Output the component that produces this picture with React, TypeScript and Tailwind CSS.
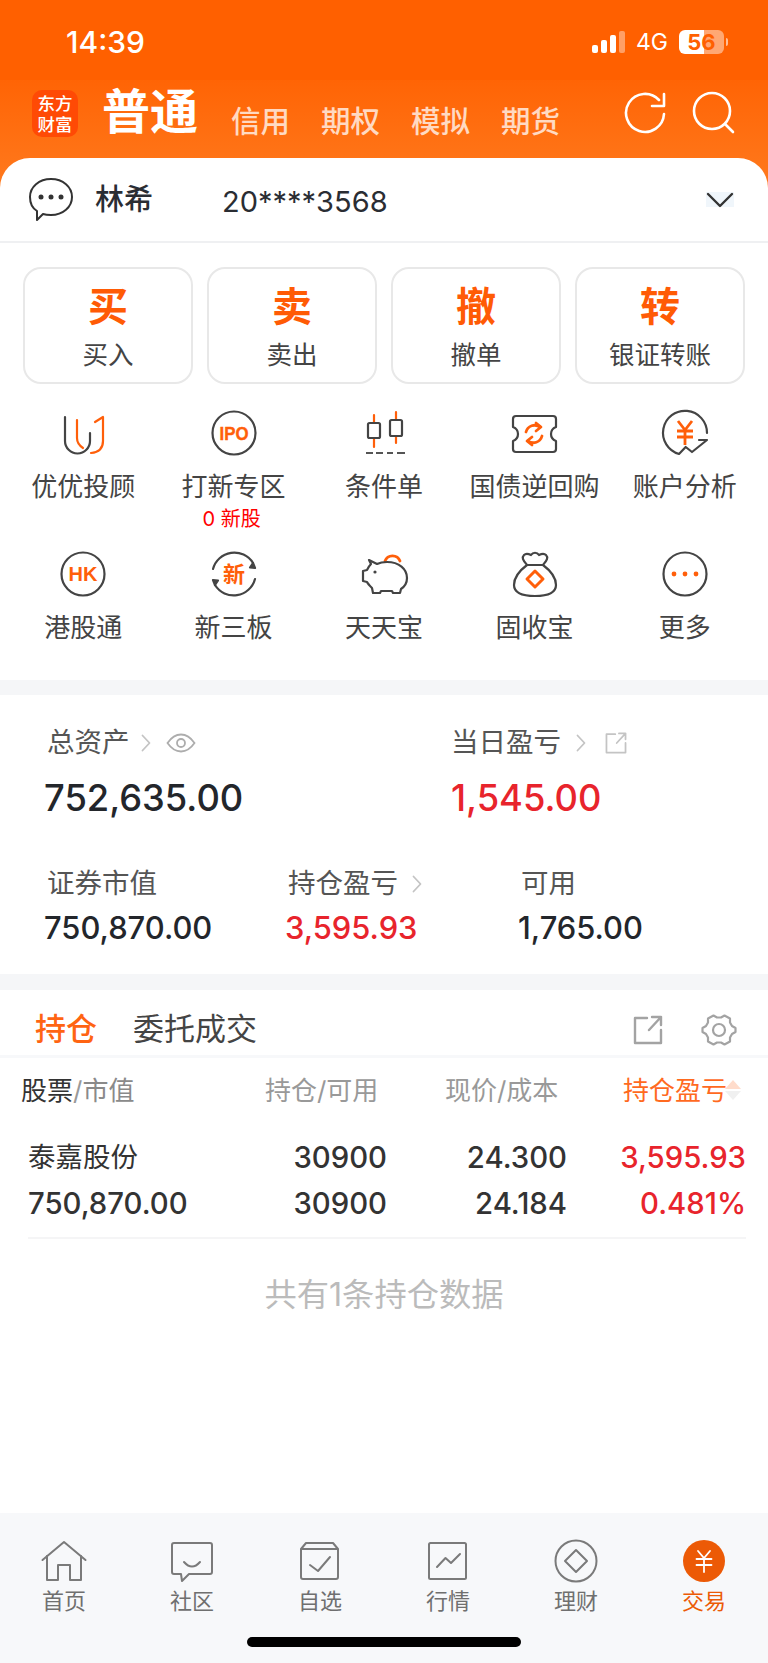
import React from "react";

const O = "#ff5f0a";
const D = "#444444";

function Circle({ c = D }: { c?: string }) {
  return <circle cx="25" cy="25" r="21.5" fill="none" stroke={c} strokeWidth="2.2" />;
}

function Icon({ name }: { name: string }) {
  const common = { fill: "none", strokeWidth: 2.2, strokeLinecap: "round" as const, strokeLinejoin: "round" as const };
  let body: React.ReactNode = null;
  if (name === "uu")
    body = (
      <g {...common}>
        <path d="M7 9V33a12.5 12.5 0 0 0 25 0V25" stroke={D} />
        <path d="M19 12V30Q19 36 25 40" stroke={O} />
        <path d="M37 14L45 9V33Q45 44 33 45" stroke={O} />
      </g>
    );
  if (name === "ipo")
    body = (
      <>
        <Circle />
        <text x="25" y="31.5" textAnchor="middle" textLength="29" lengthAdjust="spacingAndGlyphs" fontSize="18.5" fontWeight="700" fill={O} stroke={O} strokeWidth="0.4" fontFamily="'Liberation Sans',sans-serif">IPO</text>
      </>
    );
  if (name === "cond")
    body = (
      <g {...common}>
        <path d="M15 7V15M15 30V39M37 4V12M37 28V35" stroke={O} />
        <rect x="9" y="15" width="12" height="15" rx="1.5" stroke={D} />
        <rect x="31" y="12" width="12" height="16" rx="1.5" stroke={D} />
        <path d="M7 45H14M17 45H24M28 45H34M38 45H46" stroke="#555" strokeLinecap="butt" />
      </g>
    );
  if (name === "bond")
    body = (
      <g {...common}>
        <path d="M7 8H44Q47 8 47 11V19Q42 21 42 26T47 33V41Q47 44 44 44H7Q4 44 4 41V33Q9 31 9 26T4 19V11Q4 8 7 8Z" stroke={D} />
        <path d="M17 24A9 9 0 0 1 31 19" stroke={O} strokeWidth="2.8" />
        <path d="M33 28A9 9 0 0 1 19 33" stroke={O} strokeWidth="2.8" />
        <path d="M27 15L32 19L27 23" stroke={O} strokeWidth="2.8" />
        <path d="M23 29L18 33L23 37" stroke={O} strokeWidth="2.8" />
      </g>
    );
  if (name === "acct")
    body = (
      <g {...common}>
        <path d="M47 25A22 22 0 1 0 19 46L25.7 39L32 44L47 32H39" stroke={D} />
        <path d="M18 13L25 22L32 13M17 23H33M17 29H33M25 22V37" stroke={O} strokeWidth="2.8" strokeLinecap="butt" />
      </g>
    );
  if (name === "hk")
    body = (
      <>
        <Circle />
        <text x="25" y="32" textAnchor="middle" fontSize="20" fontWeight="700" fill={O} fontFamily="'Liberation Sans',sans-serif">HK</text>
      </>
    );
  if (name === "xin")
    body = (
      <>
        <g {...common} stroke={D}>
          <path d="M4 20A22 22 0 0 1 44 14" />
          <path d="M46 30A22 22 0 0 1 6 36" />
          <path d="M44 14L46 19L41 18.500Z" fill={D} />
          <path d="M6 36L4 31L9 31.500Z" fill={D} />
        </g>
        <text x="25" y="33" textAnchor="middle" fontSize="22" fontWeight="700" fill={O} fontFamily="'Noto Sans CJK SC',sans-serif">新</text>
      </>
    );
  if (name === "pig")
    body = (
      <g {...common}>
        <path d="M26 12A8 8 0 0 1 41 12" stroke={O} strokeWidth="2.8" />
        <path d="M10 11L18 15Q22 13 28 13C40 13 48 20 48 29C48 35 45 38 42 40L41 44H34L33 42H22L21 44H14L13 39C11 37 9 35 8 33L4 32V22L8 21C9 19 10 17 12 15Z" stroke={D} />
        <circle cx="16" cy="23" r="1.6" fill={D} stroke="none" />
      </g>
    );
  if (name === "bag")
    body = (
      <g {...common}>
        <path d="M18 16C10 22 5 29 5 36C5 44 12 47 26 47C40 47 47 44 47 36C47 29 42 22 34 16C37 12 40 9 37 6C35 4 32 5 30 6C28 3 24 3 22 6C20 5 17 4 15 6C12 9 15 12 18 16ZM18 16H34" stroke={D} />
        <path d="M26 22L34 30L26 38L18 30Z" stroke={O} strokeWidth="3" />
      </g>
    );
  if (name === "more")
    body = (
      <>
        <Circle />
        <circle cx="14" cy="25" r="2.4" fill={O} />
        <circle cx="25" cy="25" r="2.4" fill={O} />
        <circle cx="36" cy="25" r="2.4" fill={O} />
      </>
    );
  return (
    <svg viewBox="0 0 50 50" className="w-[50px] h-[50px] block">
      {body}
    </svg>
  );
}

function NavIcon({ name }: { name: string }) {
  const g = { fill: "none", stroke: "#7a7a7a", strokeWidth: 2, strokeLinecap: "round" as const, strokeLinejoin: "round" as const };
  return (
    <svg viewBox="0 0 46 46" className="w-[46px] h-[46px] block">
      {name === "home" && (
        <g {...g}>
          <path d="M1.500 22L23 4L44.500 22" />
          <path d="M6 18V42H17V27H29V42H40V18" />
        </g>
      )}
      {name === "chat" && (
        <g {...g}>
          <path d="M5 5H41Q43 5 43 7V34Q43 36 41 36H20L13 43L12 36H5Q3 36 3 34V7Q3 5 5 5Z" />
          <path d="M15 24Q23 33 31 24" />
        </g>
      )}
      {name === "watch" && (
        <g {...g}>
          <path d="M4 11H41M9 5H36L41 11V39Q41 41 39 41H6Q4 41 4 39V11Z" />
          <path d="M13 27L21 33L33 19" />
        </g>
      )}
      {name === "chart" && (
        <g {...g}>
          <rect x="4" y="5" width="37" height="36" rx="1.500" />
          <path d="M12 29L20.500 20L26 25L35 16" />
        </g>
      )}
      {name === "wealth" && (
        <g {...g}>
          <circle cx="23" cy="23" r="20.500" />
          <path d="M23 12L34 23L23 34L12 23Z" />
        </g>
      )}
      {name === "trade" && (
        <>
          <circle cx="23" cy="23" r="21" fill="#ec5a06" />
          <path d="M17 13L23 20L29 13M15.500 21H30.500M15.500 27H30.500M23 20V34" fill="none" stroke="#fff" strokeWidth="1.800" strokeLinecap="round" />
        </>
      )}
    </svg>
  );
}

function Chev() {
  return (
    <svg viewBox="0 0 10 18" className="w-[10px] h-[18px] block">
      <path d="M1.500 1.500L8.500 9L1.500 16.500" fill="none" stroke="#c4c4c4" strokeWidth="1.800" strokeLinecap="round" strokeLinejoin="round" />
    </svg>
  );
}

function ExtIcon({ className, color, sw }: { className: string; color: string; sw: number }) {
  return (
    <svg viewBox="0 0 30 30" className={className}>
      <path d="M14 3H2V28H28V15M16 15L28 2M19 2H28V10" fill="none" stroke={color} strokeWidth={sw} strokeLinecap="round" strokeLinejoin="round" />
    </svg>
  );
}

const actions = [
  ["买", "买入"],
  ["卖", "卖出"],
  ["撤", "撤单"],
  ["转", "银证转账"],
];

const grid: { icon: string; label: string; sub?: string }[] = [
  { icon: "uu", label: "优优投顾" },
  { icon: "ipo", label: "打新专区", sub: "0 新股" },
  { icon: "cond", label: "条件单" },
  { icon: "bond", label: "国债逆回购" },
  { icon: "acct", label: "账户分析" },
  { icon: "hk", label: "港股通" },
  { icon: "xin", label: "新三板" },
  { icon: "pig", label: "天天宝" },
  { icon: "bag", label: "固收宝" },
  { icon: "more", label: "更多" },
];

const nav = [
  ["home", "首页"],
  ["chat", "社区"],
  ["watch", "自选"],
  ["chart", "行情"],
  ["wealth", "理财"],
  ["trade", "交易"],
];

export default function App() {
  return (
    <div className="w-[768px] h-[1663px] overflow-hidden bg-white flex flex-col font-[family-name:Inter,'Noto_Sans_CJK_SC',sans-serif]">
      {/* status bar */}
      <div className="h-[80px] shrink-0 bg-[#ff6000] flex items-center justify-between pt-[4px] pl-[66px] pr-[40px] text-white">
        <span className="text-[30px] font-medium leading-none">14:39</span>
        <div className="flex items-center gap-[11px]">
          <div className="flex items-end gap-[3px] h-[22px]">
            <span className="w-[6px] h-[8px] rounded-[2px] bg-white" />
            <span className="w-[6px] h-[13px] rounded-[2px] bg-white" />
            <span className="w-[6px] h-[18px] rounded-[2px] bg-white" />
            <span className="w-[6px] h-[22px] rounded-[2px] bg-white/40" />
          </div>
          <span className="text-[23px] leading-none">4G</span>
          <div className="flex items-center gap-[2px]">
            <div className="w-[45px] h-[24px] rounded-[6px] bg-[linear-gradient(90deg,#ffffff_55%,#ffffff73_55%)] flex items-center justify-center text-[#ff6000] text-[22px] font-bold leading-none">
              56
            </div>
            <span className="w-[2px] h-[8px] rounded-r-sm bg-white/60" />
          </div>
        </div>
      </div>

      {/* orange nav + rounded account row */}
      <div className="shrink-0 bg-[linear-gradient(180deg,#ff6405_0px,#ff7a1e_110px)]">
        <div className="h-[78px] pt-[10px] pl-[32px] pr-[32px] flex items-start text-white">
          <div className="w-[46px] h-[47px] rounded-[10px] bg-[#ff4a05] flex items-center justify-center text-center text-[17.500px] leading-[21px] font-medium">
            东方<br />财富
          </div>
          <div className="ml-[24px] -mt-[1px] text-[48px] leading-[46px] font-bold">普通</div>
          <div className="ml-[33px] mt-[11px] flex gap-[31px] text-[29.500px] leading-[40px] font-medium text-white/75">
            <span>信用</span>
            <span>期权</span>
            <span>模拟</span>
            <span>期货</span>
          </div>
          <svg viewBox="0 0 44 44" className="ml-auto mt-[1px] w-[44px] h-[44px] block">
            <path d="M41 23A19 19 0 1 1 36 9M41 3V15H29" fill="none" stroke="#fff" strokeWidth="2.600" strokeLinecap="round" strokeLinejoin="round" />
          </svg>
          <svg viewBox="0 0 46 46" className="ml-[23px] -mt-[1px] w-[46px] h-[46px] block">
            <circle cx="22" cy="22" r="18" fill="none" stroke="#fff" strokeWidth="2.600" />
            <path d="M35 35L43 43" stroke="#fff" strokeWidth="2.600" strokeLinecap="round" />
          </svg>
        </div>
        <div className="h-[85px] rounded-t-[30px] bg-white border-b-2 border-[#eff0f2] flex items-center pl-[28px] pr-[34px]">
          <svg viewBox="0 0 46 46" className="w-[46px] h-[46px] block">
            <path d="M23 2C35 2 44 10 44 20C44 30 35 38 23 38C20 38 18 38 15 37L9 43L9 34C4 31 2 26 2 20C2 10 11 2 23 2Z" fill="none" stroke="#333" strokeWidth="2" strokeLinejoin="round" />
            <circle cx="13" cy="20" r="2.500" fill="#333" />
            <circle cx="23" cy="20" r="2.500" fill="#333" />
            <circle cx="33" cy="20" r="2.500" fill="#333" />
          </svg>
          <span className="ml-[21px] text-[29px] font-medium text-[#2a2d33]">林希</span>
          <span className="ml-[69px] mt-[4px] text-[29px] text-[#2a2d33]">20****3568</span>
          <div className="ml-auto w-[28px] h-[15px] bg-[#f0f6fb] flex items-center justify-center">
            <svg viewBox="0 0 28 16" className="w-[28px] h-[16px] block">
              <path d="M2 2L14 14L26 2" fill="none" stroke="#333" strokeWidth="2.400" strokeLinecap="round" strokeLinejoin="round" />
            </svg>
          </div>
        </div>
      </div>

      {/* actions */}
      <div className="shrink-0 pt-[24px] px-[23px] flex gap-[14px]">
        {actions.map(([big, small]) => (
          <div key={big} className="w-[170px] h-[117px] rounded-[18px] border-2 border-[#e8e8e8] flex flex-col items-center">
            <span className="mt-[13px] text-[40px] leading-[50px] font-bold text-[#ff5b05]">{big}</span>
            <span className="mt-[5px] text-[25.500px] leading-[36px] text-[#444]">{small}</span>
          </div>
        ))}
      </div>

      {/* grid */}
      <div className="shrink-0 h-[296px] pt-[24px] px-[8px] grid grid-cols-5 gap-y-[17px] content-start">
        {grid.map((g) => (
          <div key={g.label} className="flex flex-col items-center">
            <Icon name={g.icon} />
            <span className="mt-[12px] text-[26px] leading-[34px] text-[#444] whitespace-nowrap">{g.label}</span>
            {g.sub && <span className="-ml-[4px] h-[28px] text-[20px] leading-[30px] text-[#ff0000]">{g.sub}</span>}
          </div>
        ))}
      </div>

      <div className="h-[15px] shrink-0 bg-[#f5f6f8]" />

      {/* assets */}
      <div className="h-[279px] shrink-0 pt-[29px] pl-[44px]">
        <div className="flex">
          <div className="w-[407px]">
            <div className="pl-[3px] pt-[2px] h-[36px] flex items-center text-[27.500px] text-[#555]">
              总资产
              <span className="ml-[11px]"><Chev /></span>
              <svg viewBox="0 0 30 20" className="ml-[15px] w-[30px] h-[20px] block">
                <path d="M1.500 10C6 3.500 10 1.500 15 1.500S24 3.500 28.500 10C24 16.500 20 18.500 15 18.500S6 16.500 1.500 10Z" fill="none" stroke="#adadad" strokeWidth="1.800" />
                <circle cx="15" cy="10" r="4" fill="none" stroke="#adadad" strokeWidth="1.800" />
              </svg>
            </div>
            <div className="mt-[14px] h-[48px] flex items-center text-[36.300px] font-medium text-[#23262b]">752,635.00</div>
          </div>
          <div>
            <div className="pt-[2px] h-[36px] flex items-center text-[27.500px] text-[#555]">
              当日盈亏
              <span className="ml-[15px]"><Chev /></span>
              <ExtIcon className="ml-[19px] w-[22px] h-[22px] block" color="#c4c4c4" sw={2.400} />
            </div>
            <div className="mt-[14px] h-[48px] flex items-center text-[36.300px] font-medium text-[#e8242c]">1,545.00</div>
          </div>
        </div>
        <div className="mt-[43px] flex">
          <div className="w-[241px]">
            <div className="pl-[3px] pt-[2px] h-[36px] flex items-center text-[27.500px] text-[#555]">证券市值</div>
            <div className="mt-[7px] h-[40px] flex items-center text-[30.900px] font-medium text-[#23262b]">750,870.00</div>
          </div>
          <div className="w-[233px]">
            <div className="pl-[3px] pt-[2px] h-[36px] flex items-center text-[27.500px] text-[#555]">
              持仓盈亏
              <span className="ml-[14px]"><Chev /></span>
            </div>
            <div className="mt-[7px] h-[40px] flex items-center text-[30.900px] font-medium text-[#e8242c]">3,595.93</div>
          </div>
          <div>
            <div className="pl-[3px] pt-[2px] h-[36px] flex items-center text-[27.500px] text-[#555]">可用</div>
            <div className="mt-[7px] h-[40px] flex items-center text-[30.900px] font-medium text-[#23262b]">1,765.00</div>
          </div>
        </div>
      </div>

      <div className="h-[16px] shrink-0 bg-[#f5f6f8]" />

      {/* tabs */}
      <div className="h-[65px] shrink-0 flex items-center pl-[35px] pr-[31px] pt-[19px] pb-[5px]">
        <span className="text-[31px] font-medium text-[#ff6412]">持仓</span>
        <span className="ml-[36px] text-[31px] text-[#444]">委托成交</span>
        <ExtIcon className="ml-auto w-[30px] h-[30px] block" color="#a3a3a3" sw={2.400} />
        <svg viewBox="0 0 36 36" className="ml-[38px] w-[36px] h-[36px] block">
          <path d="M12.500 3.500L16 5.500H20L23.500 3.500L29 6.500V10.500L31 14L34.500 16V20L31 22L29 25.500V29.500L23.500 32.500L20 30.500H16L12.500 32.500L7 29.500V25.500L5 22L1.500 20V16L5 14L7 10.500V6.500Z" fill="none" stroke="#a3a3a3" strokeWidth="2.200" strokeLinejoin="round" />
          <circle cx="18" cy="18" r="6" fill="none" stroke="#a3a3a3" strokeWidth="2.200" />
        </svg>
      </div>
      <div className="h-[3px] shrink-0 bg-[#f7f8fa]" />

      {/* table */}
      <div className="h-[64px] shrink-0 pl-[21px] flex items-center text-[26px]">
        <div className="w-[244px]">
          <span className="text-[#333]">股票</span>
          <span className="text-[#999]">/</span>
          <span className="text-[#8a8a8a]">市值</span>
        </div>
        <div className="w-[180px] text-[#999]">持仓/可用</div>
        <div className="w-[178px] text-[#999]">现价/成本</div>
        <div className="text-[#ff6a1f] flex items-center whitespace-nowrap">
          持仓盈亏
          <span className="-ml-[2px] flex flex-col gap-[2px]">
            <span className="w-0 h-0 border-x-[8px] border-x-transparent border-b-[9px] border-b-[#ffdccb]" />
            <span className="w-0 h-0 border-x-[8px] border-x-transparent border-t-[9px] border-t-[#f0f0f0]" />
          </span>
        </div>
      </div>
      <div className="shrink-0 ml-[28px] mr-[22px] pt-[13px] pb-[11px] border-b-2 border-[#f5f5f6]">
        <div className="flex h-[46px] items-center text-[29.300px] text-[#333] font-medium">
          <div className="w-[250px] text-[27.500px] font-normal">泰嘉股份</div>
          <div className="w-[109px] text-right">30900</div>
          <div className="w-[180px] text-right">24.300</div>
          <div className="w-[179px] text-right text-[#e8242c]">3,595.93</div>
        </div>
        <div className="flex h-[45px] items-center text-[29.300px] text-[#333] font-medium">
          <div className="w-[250px]">750,870.00</div>
          <div className="w-[109px] text-right">30900</div>
          <div className="w-[180px] text-right">24.184</div>
          <div className="w-[179px] text-right text-[#e8242c]">0.481%</div>
        </div>
      </div>
      <div className="flex-1 pt-[31px] text-center text-[32.300px] leading-[50px] text-[#bbbbbb]">共有1条持仓数据</div>

      {/* bottom nav */}
      <div className="h-[150px] shrink-0 bg-[#f7f8fa] flex flex-col">
        <div className="pt-[25px] grid grid-cols-6">
          {nav.map(([icon, label]) => (
            <div key={icon} className="flex flex-col items-center">
              <NavIcon name={icon} />
              <span className={`mt-[2px] text-[22px] leading-[30px] ${icon === "trade" ? "text-[#ec5a06]" : "text-[#6f6f6f]"}`}>{label}</span>
            </div>
          ))}
        </div>
        <div className="mt-[21px] mx-auto w-[274px] h-[10px] rounded-full bg-black" />
      </div>
    </div>
  );
}
